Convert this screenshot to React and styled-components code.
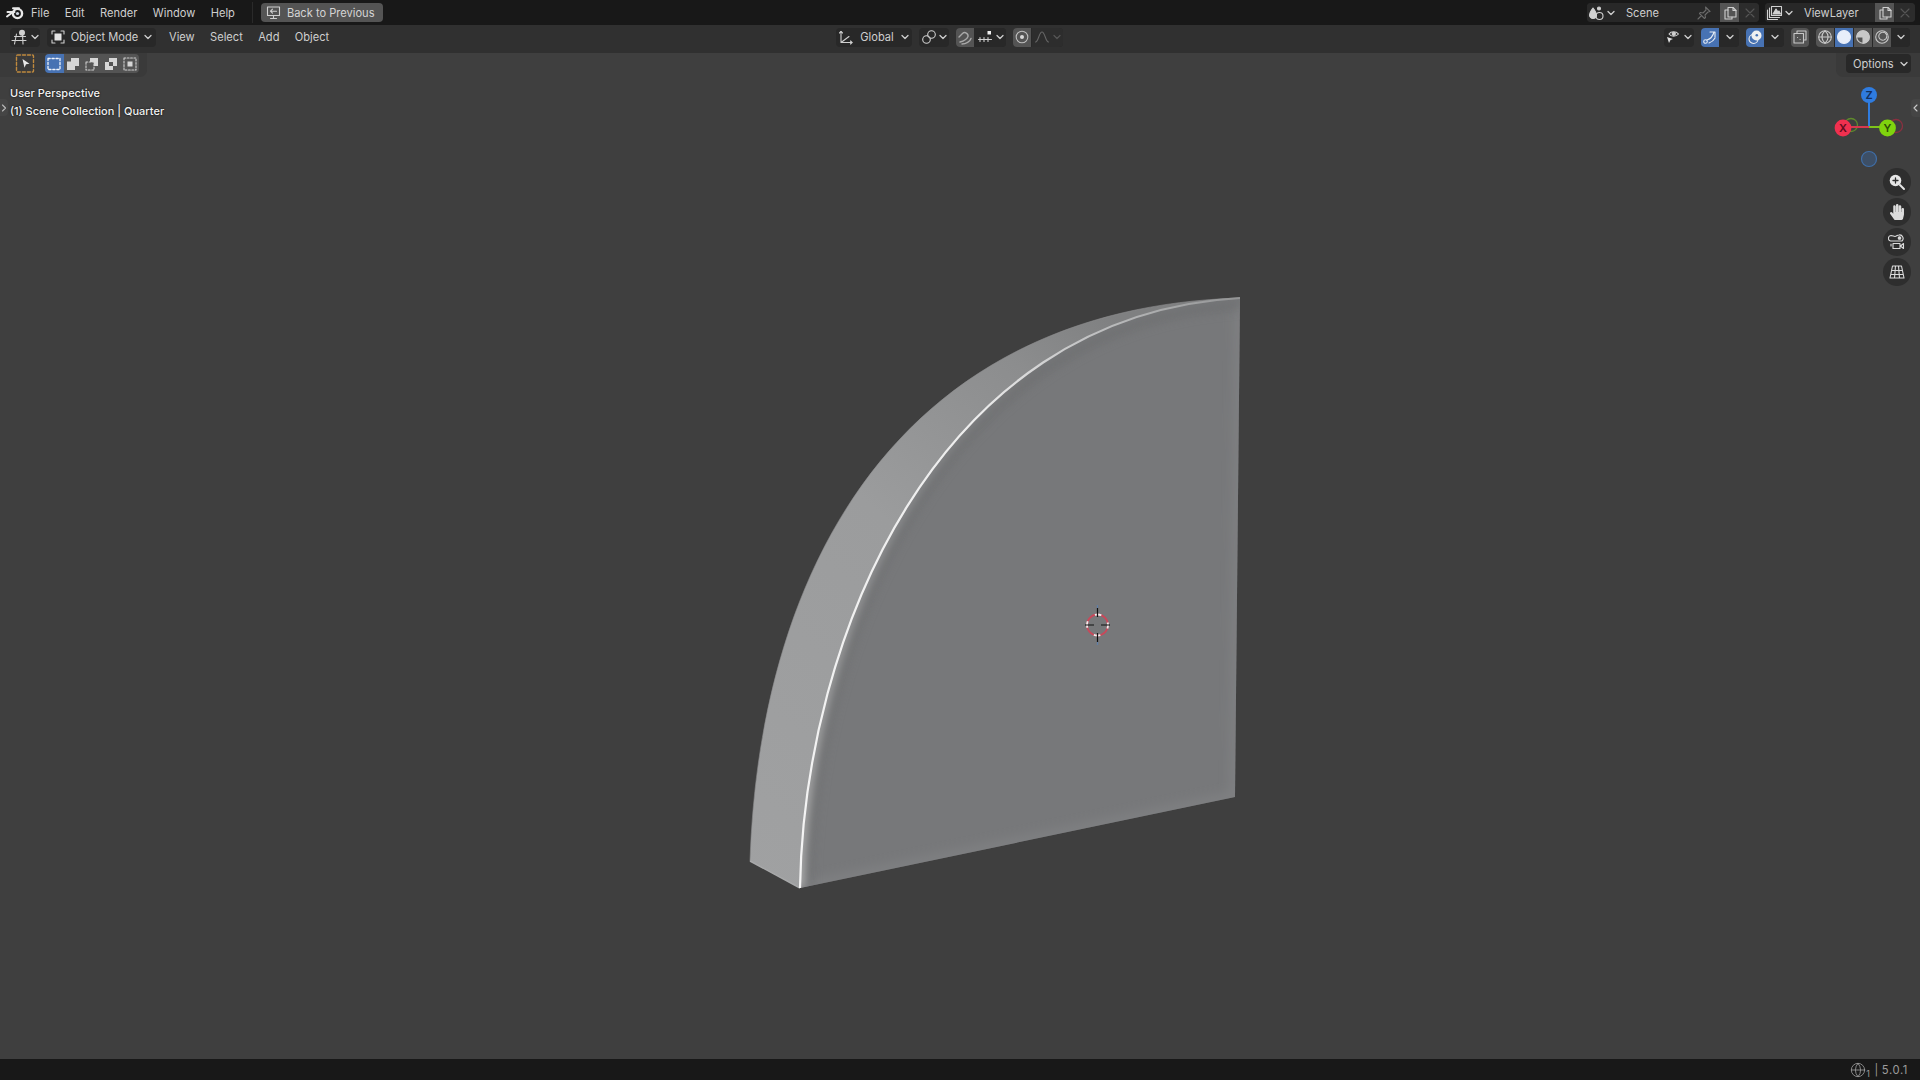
import React from "react";
import styled, { createGlobalStyle } from "styled-components";
import { FaHandPaper } from "react-icons/fa";
import { Globe } from "lucide-react";

const GlobalStyle = createGlobalStyle`
  html, body { margin: 0; padding: 0; background: #3f3f3f; overflow: hidden; }
  #root { width: 1920px; height: 1080px; }
`;

const Screen = styled.div`
  width: 1920px;
  height: 1080px;
  display: flex;
  flex-direction: column;
  font-family: Inter, "Liberation Sans", sans-serif;
  font-size: 11.1px;
  color: #cfcfcf;
  overflow: hidden;
`;
const TopBar = styled.div`
  height: 25px;
  flex: none;
  background: #181818;
  display: flex;
  align-items: center;
  padding: 0 5px 0 5px;
`;
const Logo = styled.svg`
  width: 20px;
  height: 17px;
  margin: 0 6px 0 0;
`;
const MenuItem = styled.span`
  margin-left: ${(p) => p.$ml || 0}px;
  margin-right: ${(p) => p.$gap ?? 15.4}px;
  white-space: nowrap;
`;
const Divider = styled.div`
  width: 1px;
  height: 21px;
  background: #2a2a2a;
  margin: 0 8px 0 17px;
`;
const BackButton = styled.div`
  width: 122px;
  height: 19px;
  background: #545454;
  border-radius: 4px;
  display: flex;
  align-items: center;
  gap: 6px;
  padding-left: 5px;
  box-sizing: border-box;
  color: #d4d4d4;
`;
const RightGroup = styled.div`
  margin-left: auto;
  display: flex;
  align-items: center;
  gap: ${(p) => p.$gap || 6}px;
`;
const Field = styled.div`
  display: flex;
  height: 19px;
  border-radius: 4px;
  overflow: hidden;
  background: #282828;
  align-items: stretch;
  gap: 1px;
  margin-left: ${(p) => p.$ml || 0}px;
`;
const Cell = styled.div`
  width: ${(p) => p.$w}px;
  flex: none;
  display: flex;
  align-items: center;
  justify-content: ${(p) => (p.$left ? "flex-start" : "center")};
  padding-left: ${(p) => (p.$left ? 8 : 0)}px;
  box-sizing: border-box;
  gap: ${(p) => p.$gap ?? 1}px;
  background: ${(p) => p.$bg || "#282828"};
  color: ${(p) => p.$color || "#cfcfcf"};
`;
const Header = styled.div`
  height: 28px;
  flex: none;
  background: #303030;
  display: grid;
  grid-template-columns: 826px auto 1fr;
  align-items: center;
  padding: 0 10px 4px;
  box-sizing: border-box;
`;
const HeaderLeft = styled.div`
  display: flex;
  align-items: center;
`;
const HeaderCenter = styled.div`
  display: flex;
  align-items: center;
  gap: 7px;
`;
const Viewport = styled.div`
  flex: 1;
  position: relative;
  background: #3f3f3f;
  display: flex;
  flex-direction: column;
`;
const ToolRow = styled.div`
  height: 24px;
  flex: none;
  display: flex;
  justify-content: space-between;
`;
const ToolPanel = styled.div`
  width: 147px;
  display: flex;
  align-items: center;
  background: #3a3a3a;
  border-radius: 0 0 7px 0;
  padding: 0 0 3px 15px;
  box-sizing: border-box;
`;
const OptionsPanel = styled.div`
  width: 84px;
  display: flex;
  align-items: center;
  background: #3a3a3a;
  border-radius: 0 0 0 7px;
  padding: 0 9px 3px 10px;
  box-sizing: border-box;
`;
const ToolChip = styled.div`
  width: 20px;
  height: 19px;
  display: flex;
  align-items: center;
  justify-content: center;
  margin-right: 10px;
`;
const ModeButton = styled.div`
  width: 18.8px;
  height: 19px;
  background: ${(p) => (p.$on ? "#4772b3" : "#545454")};
  display: flex;
  align-items: center;
  justify-content: center;
  &:first-child { border-radius: 4px 0 0 4px; }
  &:last-child { border-radius: 0 4px 4px 0; }
`;
const ModeGroup = styled.div`
  display: flex;
`;
const OptionsButton = styled.div`
  width: 65px;
  height: 19px;
  background: #282828;
  border-radius: 4px;
  display: flex;
  align-items: center;
  padding-left: 7px;
  box-sizing: border-box;
  gap: 5px;
`;
const Info = styled.div`
  padding: 7px 0 0 10px;
  line-height: 18px;
  font-size: 11px;
  color: #f2f2f2;
  font-weight: 500;
  text-shadow: 0 0 2px #000;
  position: relative;
`;
const CollapseTab = styled.div`
  position: absolute;
  left: 0;
  top: 22px;
  width: 8px;
  height: 17px;
  background: #454545;
  border-radius: 0 4px 4px 0;
  display: flex;
  align-items: center;
`;
const SideTab = styled(CollapseTab)`
  left: auto;
  right: 0;
  top: 46px;
  width: 9px;
  height: 18px;
  border-radius: 4px 0 0 4px;
`;
const Model = styled.svg`
  position: absolute;
  left: 720px;
  top: 227px;
  width: 560px;
  height: 640px;
`;
const GizmoSvg = styled.svg`
  position: absolute;
  right: 0;
  top: 30px;
  width: 98px;
  height: 90px;
`;
const NavColumn = styled.div`
  position: absolute;
  right: 9px;
  top: 115px;
  display: flex;
  flex-direction: column;
  gap: 2px;
`;
const NavButton = styled.div`
  width: 28px;
  height: 28px;
  border-radius: 50%;
  background: #2e2e2e;
  display: flex;
  align-items: center;
  justify-content: center;
  color: #dcdcdc;
`;
const StatusBar = styled.div`
  height: 21px;
  flex: none;
  background: #181818;
  display: flex;
  align-items: center;
  justify-content: flex-end;
  padding-right: 12px;
  color: #9c9c9c;
  font-size: 11.25px;
  letter-spacing: 0.6px;
`;
const StatusSep = styled.span`
  margin: 0 3px 0 4px;
`;
const SubOne = styled.sub`
  font-size: 9px;
  margin: 8px 0 0 0;
`;

const Ic = ({ w = 16, h = 16, children, sw = 1.1, color = "#d0d0d0" }) => (
  <svg width={w} height={h} viewBox={`0 0 ${w} ${h}`} fill="none" stroke={color} strokeWidth={sw} strokeLinecap="round" strokeLinejoin="round">
    {children}
  </svg>
);
const Chevron = ({ color = "#cfcfcf" }) => (
  <Ic w={10} h={10} sw={1.3} color={color}><path d="M2 3.5l3 3 3-3" /></Ic>
);

const NewIcon = () => (
  <Ic><path d="M6 2.5h5l3 3v6.5H6z" /><path d="M11 2.5v3h3" /><path d="M6 5H3v9h7v-2" /></Ic>
);
const CloseIcon = () => (
  <Ic color="#555"><path d="M4 4l8 8M12 4l-8 8" /></Ic>
);

const outerD = "M750 861C760 560 905 308 1240 298";
const innerD = "M800 888C804 640 935 315 1240 298";
const faceD = `${innerD}L1235 797Z`;
const bandD = "M750 861C760 560 905 308 1240 298C935 315 804 640 800 888Z";

const Shape = () => (
  <Model viewBox="720 280 560 640">
    <defs>
      <linearGradient id="band" x1="0" y1="1" x2="0.7" y2="0">
        <stop offset="0" stopColor="#a0a1a2" />
        <stop offset="0.55" stopColor="#9b9c9d" />
        <stop offset="0.85" stopColor="#8c8d8e" />
        <stop offset="1" stopColor="#7f8081" />
      </linearGradient>
      <linearGradient id="edge" x1="0" y1="1" x2="1" y2="0">
        <stop offset="0" stopColor="#f4f4f4" />
        <stop offset="0.6" stopColor="#ededed" />
        <stop offset="0.85" stopColor="#b5b6b7" />
        <stop offset="1" stopColor="#939495" />
      </linearGradient>
      <linearGradient id="glow" x1="0" y1="1" x2="1" y2="0">
        <stop offset="0" stopColor="#b8b8b8" />
        <stop offset="0.45" stopColor="#8e8f91" />
        <stop offset="0.7" stopColor="#77787a" />
      </linearGradient>
      <filter id="b1"><feGaussianBlur stdDeviation="0.65" /></filter>
      <filter id="b4"><feGaussianBlur stdDeviation="4" /></filter>
      <filter id="b8"><feGaussianBlur stdDeviation="6" /></filter>
      <clipPath id="faceClip"><path d={faceD} /></clipPath>
    </defs>
    <path d={bandD} fill="url(#band)" />
    <path d="M750 861L800 888" stroke="#a8a9aa" strokeWidth="1.5" />
    <path d={outerD} fill="none" stroke="#8d8e8f" strokeWidth="1" opacity="0.6" />
    <path d={faceD} fill="#77787a" />
    <g clipPath="url(#faceClip)">
      <path d="M800 888L1235 797L1240 298" fill="none" stroke="#828385" strokeWidth="8" filter="url(#b8)" />
      <path d={innerD} fill="none" stroke="#6d6e70" strokeWidth="20" filter="url(#b8)" />
      <path d={innerD} fill="none" stroke="url(#glow)" strokeWidth="8" filter="url(#b4)" />
    </g>
    <path d={innerD} fill="none" stroke="url(#edge)" strokeWidth="2.200" filter="url(#b1)" />
    <g fill="none">
      <circle cx="1097.500" cy="625" r="10.500" stroke="#c9485a" strokeWidth="1.800" />
      <circle cx="1097.500" cy="625" r="10.500" stroke="#f0f0f0" strokeWidth="1.800" strokeDasharray="6.600 9.900" strokeDashoffset="3" />
      <path d="M1097.500 608v9M1097.500 633v9M1085 625h9M1101 625h9" stroke="#111" strokeWidth="1.200" />
      <path d="M1097.500 605v3" stroke="#5f7fa8" strokeWidth="1.200" />
      <path d="M1097.500 642v3" stroke="#5f7fa8" strokeWidth="1.200" />
    </g>
  </Model>
);

const Gizmo = () => (
  <GizmoSvg viewBox="1822 83 98 90">
    <circle cx="1869" cy="159" r="7.500" fill="#3d4f66" stroke="#3f6ea8" strokeWidth="1.2" />
    <circle cx="1851" cy="125" r="6.500" fill="none" stroke="#5f8a2c" strokeWidth="1.3" />
    <circle cx="1896" cy="126" r="6.500" fill="none" stroke="#8a3040" strokeWidth="1.3" />
    <path d="M1869 127V100" stroke="#2f7ce0" strokeWidth="2" />
    <path d="M1869 127H1848" stroke="#d8384e" strokeWidth="2" />
    <path d="M1869 127H1882" stroke="#7ec41a" strokeWidth="2" />
    <circle cx="1869" cy="95" r="8" fill="#2f7ce0" />
    <circle cx="1843" cy="128" r="8.400" fill="#f0304f" />
    <circle cx="1887.500" cy="128" r="8.400" fill="#7fd30e" />
    <text x="1869" y="99" textAnchor="middle" fontSize="11" fontWeight="600" fontFamily="Inter, sans-serif" fill="#123060">Z</text>
    <text x="1843" y="132" textAnchor="middle" fontSize="11" fontWeight="600" fontFamily="Inter, sans-serif" fill="#600b1c">X</text>
    <text x="1887.500" y="132" textAnchor="middle" fontSize="11" fontWeight="600" fontFamily="Inter, sans-serif" fill="#2c4d03">Y</text>
  </GizmoSvg>
);

export default function App() {
  return (
    <>
      <GlobalStyle />
      <Screen>
        <TopBar>
          <Logo viewBox="0 0 20 17">
            <circle cx="12.500" cy="9.500" r="4.600" fill="none" stroke="#e8e8e8" strokeWidth="2.400" />
            <circle cx="12.500" cy="9.500" r="1.600" fill="#cfd6e0" />
            <path d="M8 4.200h6M2.500 8h7M2 12.500l6-4.500" stroke="#e8e8e8" strokeWidth="2" strokeLinecap="round" />
          </Logo>
          <MenuItem>File</MenuItem>
          <MenuItem>Edit</MenuItem>
          <MenuItem>Render</MenuItem>
          <MenuItem>Window</MenuItem>
          <MenuItem $gap={0}>Help</MenuItem>
          <Divider />
          <BackButton>
            <Ic w={15} h={15}>
              <path d="M1.500 2h12v8.500h-12zM7.500 10.500V13M4.500 13.500h6" />
              <path d="M10.500 6.200H4.500M6.500 4.200l-2 2 2 2" />
            </Ic>
            Back to Previous
          </BackButton>
          <RightGroup>
            <Field>
              <Cell $w={30}>
                <Ic w={17} h={16}>
                  <path d="M5 3c2 3 3.500 4.500 3.500 7a3.500 3.500 0 0 1-7 0C1.500 7.500 3 6 5 3z" fill="#d0d0d0" />
                  <circle cx="11" cy="3.500" r="1.500" fill="#d0d0d0" />
                  <circle cx="11.500" cy="11" r="3.500" />
                </Ic>
                <Chevron />
              </Cell>
              <Cell $w={70} $left>Scene</Cell>
              <Cell $w={30} $color="#666">
                <Ic color="#6a6a6a"><path d="M9.500 2l4.500 4.500-2 .5-3 3 .5 2.500-1 1-5-5 1-1 2.500.5 3-3zM5.500 10.500L2 14" /></Ic>
              </Cell>
              <Cell $w={19} $bg="#545454"><NewIcon /></Cell>
              <Cell $w={19} $bg="#2c2c2c"><CloseIcon /></Cell>
            </Field>
            <Field>
              <Cell $w={30}>
                <Ic w={17} h={16}>
                  <path d="M1.500 5v9.500h10M3.500 3v9.500h10M5.500 1.500h10v9h-10z" />
                  <path d="M7 9l3-5 2 3 1-1 1.500 3z" fill="#d0d0d0" />
                </Ic>
                <Chevron />
              </Cell>
              <Cell $w={78} $left>ViewLayer</Cell>
              <Cell $w={19} $bg="#545454"><NewIcon /></Cell>
              <Cell $w={20} $bg="#2c2c2c"><CloseIcon /></Cell>
            </Field>
          </RightGroup>
        </TopBar>

        <Header>
          <HeaderLeft>
            <Field>
              <Cell $w={30}>
                <Ic w={18} h={16}>
                  <path d="M1 11.500h14M3.500 7.500h11M5.500 5l-2 10M11.500 5l.5 10" />
                  <circle cx="11" cy="3.800" r="3" fill="#d0d0d0" stroke="none" />
                </Ic>
                <Chevron />
              </Cell>
            </Field>
            <Field $ml={7}>
              <Cell $w={109} $gap={5}>
                <Ic>
                  <rect x="4.500" y="4.500" width="7" height="7" fill="#e4e4e4" stroke="none" />
                  <path d="M2 5V2h3M11 2h3v3M14 11v3h-3M5 14H2v-3" />
                </Ic>
                Object Mode
                <Chevron />
              </Cell>
            </Field>
            <MenuItem $ml={13}>View</MenuItem>
            <MenuItem>Select</MenuItem>
            <MenuItem>Add</MenuItem>
            <MenuItem>Object</MenuItem>
          </HeaderLeft>
          <HeaderCenter>
            <Field>
              <Cell $w={76} $gap={6}>
                <Ic>
                  <path d="M3 2.500v11h11M3 13.500l8-6" />
                  <path d="M1.500 4L3 2.500 4.500 4M12.500 12l1.500 1.500-1.500 1.500" />
                </Ic>
                Global
                <Chevron />
              </Cell>
            </Field>
            <Field>
              <Cell $w={30}>
                <Ic>
                  <circle cx="5.500" cy="10.500" r="3.800" />
                  <circle cx="10.500" cy="5.500" r="3.800" />
                </Ic>
                <Chevron />
              </Cell>
            </Field>
            <Field>
              <Cell $w={18} $bg="#545454">
                <Ic color="#a9a9a9" sw={1.4}><path d="M3 13c4-1 7-3 8-5.500a3.300 3.300 0 0 0-5.500-3L2 8" /><path d="M14 9.500c-1 3-5 5.500-9 5.500" /></Ic>
              </Cell>
              <Cell $w={31} $gap={2}>
                <Ic>
                  <path d="M1.500 10.500h13M3 8.500v4M7 8.500v4M11 8.500v4" />
                  <rect x="10.500" y="2" width="3.500" height="3.500" fill="#eee" stroke="none" />
                </Ic>
                <Chevron />
              </Cell>
            </Field>
            <Field>
              <Cell $w={18} $bg="#545454">
                <Ic color="#bdbdbd">
                  <circle cx="8" cy="8" r="5.800" />
                  <circle cx="8" cy="8" r="2" fill="#d8d8d8" stroke="none" />
                </Ic>
              </Cell>
              <Cell $w={31} $bg="#2d2d2d" $gap={2}>
                <Ic color="#666"><path d="M1.500 13c3 0 3.500-10 6.500-10s3.500 10 6.500 10" /></Ic>
                <Chevron color="#555" />
              </Cell>
            </Field>
          </HeaderCenter>
          <RightGroup $gap={7}>
            <Field>
              <Cell $w={30}>
                <Ic w={17} h={16}>
                  <path d="M4 5c2-3 7-3 9.500 0-2.500 3-7.500 3-9.500 0z" />
                  <circle cx="8.800" cy="4.800" r="1.600" fill="#d0d0d0" />
                  <path d="M2 8l6 2-2.500 1L4 14z" fill="#e0e0e0" stroke="none" />
                </Ic>
                <Chevron />
              </Cell>
            </Field>
            <Field>
              <Cell $w={18} $bg="#4772b3">
                <Ic color="#e6ecf5"><circle cx="3.500" cy="12.500" r="1.800" /><path d="M5 11c3-1 6-4 7-8M8 3h5v5M7 14c3-1 5-3 6-5" /></Ic>
              </Cell>
              <Cell $w={19}><Chevron /></Cell>
            </Field>
            <Field>
              <Cell $w={18} $bg="#4772b3">
                <Ic color="#f0f0f0">
                  <circle cx="9.500" cy="6.500" r="5" fill="#f0f0f0" stroke="none" />
                  <circle cx="6.500" cy="10" r="4.500" />
                  <circle cx="9.800" cy="6.200" r="1.300" fill="#4772b3" stroke="none" />
                </Ic>
              </Cell>
              <Cell $w={19}><Chevron /></Cell>
            </Field>
            <Field>
              <Cell $w={18} $bg="#545454">
                <Ic color="#c8c8c8">
                  <path d="M5 4V2h9v9h-2" />
                  <rect x="2" y="4.500" width="9.500" height="9.500" />
                  <path d="M5.500 8.500h.1M8 10.500h.1" />
                </Ic>
              </Cell>
            </Field>
            <Field>
              <Cell $w={18} $bg="#545454">
                <Ic color="#c8c8c8"><circle cx="8" cy="8" r="6.300" /><path d="M1.700 8h12.600M8 1.700c-4 4-4 8.600 0 12.600M8 1.700c4 4 4 8.600 0 12.600" /></Ic>
              </Cell>
              <Cell $w={18} $bg="#4772b3">
                <Ic color="#e8eefa"><circle cx="8" cy="8" r="6.500" fill="#e8eefa" /></Ic>
              </Cell>
              <Cell $w={18} $bg="#545454">
                <Ic color="#c8c8c8"><circle cx="8" cy="8" r="6.300" /><path d="M8 1.700a6.300 6.300 0 0 1 0 12.600V8H1.700A6.300 6.300 0 0 1 8 1.700z" fill="#c8c8c8" /></Ic>
              </Cell>
              <Cell $w={18} $bg="#545454">
                <Ic color="#c8c8c8"><circle cx="8" cy="8" r="6.300" /><circle cx="8.800" cy="7.200" r="4" strokeDasharray="2 1" /></Ic>
              </Cell>
              <Cell $w={18}><Chevron /></Cell>
            </Field>
          </RightGroup>
        </Header>

        <Viewport>
          <ToolRow>
            <ToolPanel>
              <ToolChip>
                <Ic w={20} h={19}>
                  <rect x="1.500" y="1" width="17" height="17" rx="1" stroke="#c08a3e" strokeDasharray="3 2" strokeWidth={1.4} />
                  <path d="M7.500 5l7 4.800-3.500.5-1.500 3.500z" fill="#e8e8e8" stroke="none" />
                </Ic>
              </ToolChip>
              <ModeGroup>
                <ModeButton $on>
                  <Ic color="#f0f4fb" sw={1.3}><rect x="2" y="2.500" width="12" height="11" strokeDasharray="2.200 1.800" /></Ic>
                </ModeButton>
                <ModeButton>
                  <Ic><path d="M2 5.500h4V2h8v8h-4v4H2z" fill="#d6d6d6" stroke="none" /></Ic>
                </ModeButton>
                <ModeButton>
                  <Ic>
                    <path d="M6 2h8v8H10V6H6z" fill="#d6d6d6" stroke="none" />
                    <rect x="2" y="6" width="8" height="8" strokeDasharray="1.800 1.500" />
                  </Ic>
                </ModeButton>
                <ModeButton>
                  <Ic><path d="M2 6h4V2h8v8h-4v4H2zM6 6v4h4V6z" fill="#d6d6d6" stroke="none" fillRule="evenodd" /></Ic>
                </ModeButton>
                <ModeButton>
                  <Ic>
                    <rect x="2" y="2" width="12" height="12" strokeDasharray="1.800 1.500" />
                    <rect x="5.500" y="5.500" width="5" height="5" fill="#d6d6d6" stroke="none" />
                  </Ic>
                </ModeButton>
              </ModeGroup>
            </ToolPanel>
            <OptionsPanel>
              <OptionsButton>Options<Chevron /></OptionsButton>
            </OptionsPanel>
          </ToolRow>
          <Info>
            <div>User Perspective</div>
            <div>(1) Scene Collection | Quarter</div>
            <CollapseTab><Ic w={8} h={10} color="#bbb"><path d="M2.500 2l3 3-3 3" /></Ic></CollapseTab>
          </Info>
          <SideTab><Ic w={9} h={10} color="#ccc"><path d="M6 2L3 5l3 3" /></Ic></SideTab>
          <Shape />
          <Gizmo />
          <NavColumn>
            <NavButton>
              <Ic w={18} h={18} color="#e6e6e6" sw={2}>
                <circle cx="7.500" cy="7.500" r="5.800" fill="#e6e6e6" stroke="none" />
                <path d="M7.500 5v5M5 7.500h5" stroke="#2e2e2e" strokeWidth={1.3} />
                <path d="M12 12l4 4" />
              </Ic>
            </NavButton>
            <NavButton><FaHandPaper size={16} /></NavButton>
            <NavButton>
              <Ic w={18} h={18} color="#dcdcdc">
                <path d="M2.500 8a2.800 2.800 0 0 1 .5-5.500c2 0 2.500 1 4 1s2-1.500 4-1.500a3.500 3.500 0 0 1 3 6z" />
                <circle cx="11.500" cy="5" r="1.300" fill="#dcdcdc" />
                <path d="M5 10.500h7v5H5zM3 11v2M15.500 10.500v5l-3-2.500z" />
              </Ic>
            </NavButton>
            <NavButton>
              <Ic w={18} h={18} color="#dcdcdc">
                <path d="M4.500 3h9l2.500 12H2zM3.500 7.500h11M3 11.500h12M7.500 3L6.500 15M10.500 3l1 12" />
              </Ic>
            </NavButton>
          </NavColumn>
        </Viewport>

        <StatusBar>
          <Globe size={16} strokeWidth={1.25} />
          <SubOne>1</SubOne>
          <StatusSep>|</StatusSep>
          5.0.1
        </StatusBar>
      </Screen>
    </>
  );
}
